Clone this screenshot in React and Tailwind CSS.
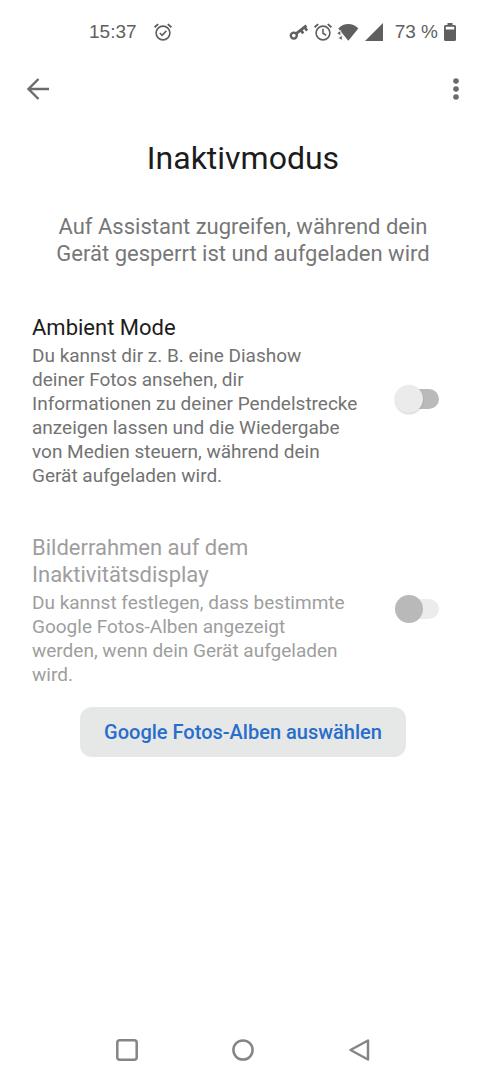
import { useState } from "react";

function AlarmIcon({ checked = false }) {
  return (
    <svg viewBox="0 0 20 20" className="h-5 w-5" fill="none" stroke="currentColor" strokeWidth="1.6" aria-hidden="true">
      <circle cx="10" cy="11" r="6.9" />
      <path d="M1.6 5.2 5.2 2.1M18.4 5.2l-3.6-3.1" strokeWidth="1.9" />
      {checked ? <path d="m6.8 11 2.3 2.3 4.3-4.4" /> : <path d="M10 6.8v4.5l3.1 1.9" />}
    </svg>
  );
}

function StatusBar() {
  return (
    <div className="flex h-16 items-center justify-between pl-[89px] pr-[30px] text-[19px] text-[#5f5f5f]">
      <div className="flex items-center gap-4">
        <span>15:37</span>
        <AlarmIcon checked />
      </div>
      <div className="flex items-center">
        {/* VPN key */}
        <svg viewBox="0 0 20 18" className="mr-1 h-[18px] w-5" fill="none" stroke="currentColor" aria-hidden="true">
          <circle cx="4.8" cy="12.6" r="3" strokeWidth="2.4" />
          <path d="M7.2 10.6 17.4 2.6" strokeWidth="2.7" />
          <path d="m12 7.4 2.3 3M15.6 4.4l2.5 3.2" strokeWidth="2.6" />
        </svg>
        <AlarmIcon />
        {/* Wi-Fi */}
        <svg viewBox="0 0 22 18" className="ml-1 h-[18px] w-[22px]" fill="currentColor" aria-hidden="true">
          <path d="M1.3 5.5C7-.4 15.6-.4 21.3 5.5L11.3 17.7Z" />
          <path stroke="#fff" strokeWidth=".8" d="M-.4 10.2 3.8 7.6v5.2ZM1 14.9l4.2-2.6v5.2Z" />
        </svg>
        {/* Mobile signal */}
        <svg viewBox="0 0 18 18" className="ml-1.5 h-[18px] w-[18px]" fill="currentColor" aria-hidden="true">
          <path d="M18 0v18H0Z" />
        </svg>
        <span className="ml-3">73 %</span>
        {/* Battery */}
        <svg viewBox="0 0 12 18" className="ml-1.5 h-[18px] w-3" aria-hidden="true">
          <path fill="currentColor" fillRule="evenodd" d="M3.5 0h5v2h2A1.5 1.5 0 0 1 12 3.5v13a1.5 1.5 0 0 1-1.5 1.5h-9A1.5 1.5 0 0 1 0 16.5v-13A1.5 1.5 0 0 1 1.5 2h2ZM1.8 3.8v2.8h8.4V3.8Z" />
        </svg>
      </div>
    </div>
  );
}

function Toggle(props) {
  return (
    <input
      type="checkbox"
      role="switch"
      className="relative mb-1 flex h-7 w-11 shrink-0 appearance-none items-center before:ml-2 before:h-5 before:w-9 before:rounded-full before:bg-[#bababa] after:absolute after:left-0 after:h-7 after:w-7 after:rounded-full after:bg-[#ebebeb] after:shadow-[0_1px_2px_rgba(0,0,0,0.2)] checked:before:bg-blue-200 checked:after:left-4 checked:after:bg-blue-600 disabled:before:bg-[#ececec] disabled:after:bg-[#b9b9b9] disabled:after:shadow-none"
      {...props}
    />
  );
}

function SettingRow({ id, title, disabled = false, children, ...rest }) {
  return (
    <div className={disabled ? "flex items-center justify-between text-[#9e9e9e]" : "flex items-center justify-between text-[#737373]"}>
      <div className="w-[340px]">
        <label
          htmlFor={id}
          className={disabled ? "block text-[22px] leading-[27px]" : "block text-[22px] leading-[27px] text-[#1c1c1c]"}
        >
          {title}
        </label>
        <p id={`${id}-info`} className="mt-[3px] text-[19px] leading-6">{children}</p>
      </div>
      <Toggle id={id} aria-describedby={`${id}-info`} disabled={disabled} {...rest} />
    </div>
  );
}

export default function App() {
  const [ambient, setAmbient] = useState(false);

  return (
    <div className="flex min-h-screen flex-col bg-white font-['Roboto',sans-serif]">
      <header>
        <div className="font-['Liberation_Sans',sans-serif]">
          <StatusBar />
        </div>
        <div className="flex h-[50px] items-center justify-between px-[26px] text-[#6b6b6b]">
          <button type="button" aria-label="Zurück">
            <svg viewBox="0 0 24 24" className="h-6 w-6" fill="none" stroke="currentColor" strokeWidth="2.4" aria-hidden="true">
              <path d="M23 12H3M12.5 2 2.5 12l10 10" />
            </svg>
          </button>
          <button type="button" aria-label="Weitere Optionen">
            <svg viewBox="0 0 8 24" className="h-6 w-2" fill="currentColor" aria-hidden="true">
              <circle cx="4" cy="4" r="2.8" />
              <circle cx="4" cy="12" r="2.8" />
              <circle cx="4" cy="20" r="2.8" />
            </svg>
          </button>
        </div>
      </header>

      <main className="flex-1 pt-6">
        <h1 className="text-center text-[32px] leading-10 text-[#1c1c1c]">Inaktivmodus</h1>
        <p className="mt-[35px] px-10 text-center text-[22px] leading-[27px] text-[#777777]">
          Auf Assistant zugreifen, während dein
          <br />
          Gerät gesperrt ist und aufgeladen wird
        </p>

        <div className="mt-[47px] space-y-[46px] pl-8 pr-[47px]">
          <SettingRow
            id="ambient"
            title="Ambient Mode"
            checked={ambient}
            onChange={(e) => setAmbient(e.target.checked)}
          >
            Du kannst dir z. B. eine Diashow
            <br />
            deiner Fotos ansehen, dir
            <br />
            Informationen zu deiner Pendelstrecke anzeigen lassen und die Wiedergabe
            <br />
            von Medien steuern, während dein
            <br />
            Gerät aufgeladen wird.
          </SettingRow>
          <SettingRow id="frame" title="Bilderrahmen auf dem Inaktivitätsdisplay" disabled>
            Du kannst festlegen, dass bestimmte Google Fotos-Alben angezeigt
            <br />
            werden, wenn dein Gerät aufgeladen wird.
          </SettingRow>
        </div>

        <div className="mt-5 flex justify-center">
          <button type="button" className="h-[50px] rounded-xl bg-[#e6e8e7] px-6 text-xl font-medium text-[#286dcb]">
            Google Fotos-Alben auswählen
          </button>
        </div>
      </main>

      <nav className="flex items-center justify-center gap-[92px] pb-[18px] text-[#858585]">
        <button type="button" aria-label="Übersicht">
          <svg viewBox="0 0 24 24" className="h-6 w-6" fill="none" stroke="currentColor" strokeWidth="2.5" aria-hidden="true">
            <rect x="2.3" y="2.3" width="19.4" height="19.4" rx="2.5" />
          </svg>
        </button>
        <button type="button" aria-label="Startbildschirm">
          <svg viewBox="0 0 24 24" className="h-6 w-6" fill="none" stroke="currentColor" strokeWidth="2.5" aria-hidden="true">
            <circle cx="12" cy="12" r="9.6" />
          </svg>
        </button>
        <button type="button" aria-label="Zurück">
          <svg viewBox="0 0 24 24" className="h-6 w-6" fill="none" stroke="currentColor" strokeWidth="2.5" strokeLinejoin="round" aria-hidden="true">
            <path d="M21 2.5v19L3.5 12Z" />
          </svg>
        </button>
      </nav>
    </div>
  );
}
